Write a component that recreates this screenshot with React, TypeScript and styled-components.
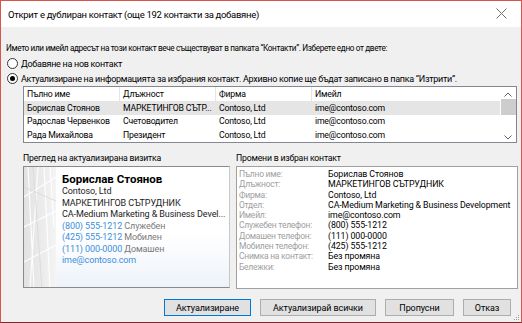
import React from 'react';
import styled, { createGlobalStyle } from 'styled-components';

const GlobalStyle = createGlobalStyle`
    html, body {
        margin: 0;
        padding: 0;
        background: #ffffff;
    }
    * {
        box-sizing: border-box;
    }
`

type Row = { name: string; title: string; company: string; email: string };

const rows: Row[] = [
    { name: 'Борислав Стоянов', title: 'МАРКЕТИНГОВ СЪТР...', company: 'Contoso, Ltd', email: 'ime@contoso.com' },
    { name: 'Радослав Червенков', title: 'Счетоводител', company: 'Contoso, Ltd', email: 'ime@contoso.com' },
    { name: 'Рада Михайлова', title: 'Президент', company: 'Contoso, Ltd', email: 'ime@contoso.com' },
];

const changes: [string, string][] = [
    ['Пълно име:', 'Борислав Стоянов'],
    ['Длъжност:', 'МАРКЕТИНГОВ СЪТРУДНИК'],
    ['Фирма:', 'Contoso, Ltd'],
    ['Отдел:', 'CA-Medium Marketing & Business Development'],
    ['Имейл:', 'ime@contoso.com'],
    ['Служебен телефон:', '(800) 555-1212'],
    ['Домашен телефон:', '(111) 000-0000'],
    ['Мобилен телефон:', '(425) 555-1212'],
    ['Снимка на контакт:', 'Без промяна'],
    ['Бележки:', 'Без промяна'],
];

function App() {
    return (
        <>
            <GlobalStyle />
            <Window>
                <TitleBar>
                    <Title>Открит е дублиран контакт (още 192 контакти за добавяне)</Title>
                    <CloseIcon width="11" height="11" viewBox="0 0 11 11">
                        <path d="M0.5 0.5 L10.5 10.5 M10.5 0.5 L0.5 10.5" stroke="#707070" strokeWidth="1" fill="none" />
                    </CloseIcon>
                </TitleBar>
                <Body>
                    <Intro>Името или имейл адресът на този контакт вече съществуват в папката “Контакти”. Изберете едно от двете:</Intro>
                    <RadioRow>
                        <Radio />
                        Добавяне на нов контакт
                    </RadioRow>
                    <RadioRow>
                        <Radio checked />
                        Актуализиране на информацията за избрания контакт. Архивно копие ще бъдат записано в папка “Изтрити”.
                    </RadioRow>

                    <ListBox>
                        <ListGrid>
                            <HeaderRow>
                                <HeadCell>Пълно име</HeadCell>
                                <HeadCell>Длъжност</HeadCell>
                                <HeadCell>Фирма</HeadCell>
                                <HeadCell last>Имейл</HeadCell>
                            </HeaderRow>
                            {rows.map((r, i) => (
                                <DataRow key={i} selected={i === 0}>
                                    <Cell>{r.name}</Cell>
                                    <Cell>{r.title}</Cell>
                                    <Cell>{r.company}</Cell>
                                    <Cell>{r.email}</Cell>
                                </DataRow>
                            ))}
                        </ListGrid>
                        <ScrollBar>
                            <Arrow viewBox="0 0 8 5" width="8" height="5">
                                <path d="M0.5 4.5 L4 1 L7.5 4.5" stroke="#606060" fill="none" />
                            </Arrow>
                            <Thumb />
                            <Track />
                            <Arrow viewBox="0 0 8 5" width="8" height="5">
                                <path d="M0.5 0.5 L4 4 L7.5 0.5" stroke="#606060" fill="none" />
                            </Arrow>
                        </ScrollBar>
                    </ListBox>

                    <Panels>
                        <Panel>
                            <PanelLabel>Преглед на актуализирана визитка</PanelLabel>
                            <Card>
                                <CardStripe>
                                    <svg width="32" height="121" viewBox="0 0 32 121">
                                        <path d="M4 0 L10 121 M14 0 L6 121 M20 0 L26 121 M0 30 L32 10 M0 60 L32 44 M0 95 L32 78 M26 0 L30 60" stroke="#ffffff" strokeWidth="1.2" fill="none" opacity="0.9" />
                                        <path d="M9 0 L18 121 M0 20 L32 34" stroke="#d8d8d8" strokeWidth="0.8" fill="none" />
                                    </svg>
                                </CardStripe>
                                <CardBody>
                                    <CardName>Борислав Стоянов</CardName>
                                    <CardLine>Contoso, Ltd</CardLine>
                                    <CardLine>МАРКЕТИНГОВ СЪТРУДНИК</CardLine>
                                    <CardLine>CA-Medium Marketing &amp; Business Devel...</CardLine>
                                    <CardLine><Link>(800) 555-1212</Link> <Muted>Служебен</Muted></CardLine>
                                    <CardLine><Link>(425) 555-1212</Link> <Muted>Мобилен</Muted></CardLine>
                                    <CardLine><Link>(111) 000-0000</Link> <Muted>Домашен</Muted></CardLine>
                                    <CardLine><Link>ime@contoso.com</Link></CardLine>
                                </CardBody>
                            </Card>
                        </Panel>
                        <Panel>
                            <PanelLabel>Промени в избран контакт</PanelLabel>
                            <ChangesBox>
                                {changes.map(([k, v]) => (
                                    <ChangeRow key={k}>
                                        <ChangeKey>{k}</ChangeKey>
                                        <ChangeValue>{v}</ChangeValue>
                                    </ChangeRow>
                                ))}
                            </ChangesBox>
                        </Panel>
                    </Panels>

                    <ButtonRow>
                        <DialogButton focused width={87}>Актуализиране</DialogButton>
                        <DialogButton width={116}>Актуализирай всички</DialogButton>
                        <DialogButton width={69}>Пропусни</DialogButton>
                        <DialogButton width={48}>Отказ</DialogButton>
                    </ButtonRow>
                    <Grip viewBox="0 0 6 6" width="6" height="6">
                        <rect x="4" y="0" width="1" height="1" fill="#a0a0a0" />
                        <rect x="2" y="2" width="1" height="1" fill="#a0a0a0" />
                        <rect x="4" y="2" width="1" height="1" fill="#a0a0a0" />
                        <rect x="0" y="4" width="1" height="1" fill="#a0a0a0" />
                        <rect x="2" y="4" width="1" height="1" fill="#a0a0a0" />
                        <rect x="4" y="4" width="1" height="1" fill="#a0a0a0" />
                    </Grip>
                </Body>
            </Window>
        </>
    );
}

export default App;

const Window = styled.div`
    width: 522px;
    height: 323px;
    border: 1px solid #d9534f;
    border-bottom-color: #7a2a2a;
    display: flex;
    flex-direction: column;
    font-family: Roboto, "Noto Sans", sans-serif;
    color: #000;
    overflow: hidden;
`

const TitleBar = styled.div`
    height: 26px;
    background: #ffffff;
    display: flex;
    align-items: center;
    justify-content: space-between;
    padding: 0 14px 0 7px;
`

const Title = styled.div`
    font-size: 9.5px;
    letter-spacing: -0.3px;
    color: #000;
    margin-top: 1px;
    white-space: nowrap;
`

const CloseIcon = styled.svg`
    margin-top: -1px;
`

const Body = styled.div`
    flex: 1;
    background: #f0f0f0;
    padding: 15px 5px 0 5px;
    display: flex;
    flex-direction: column;
    position: relative;
    font-size: 8.7px;
    letter-spacing: -0.2px;
`

const Intro = styled.div`
    height: 13px;
    line-height: 13px;
    margin-bottom: 1px;
    white-space: nowrap;
    font-size: 8.2px;
    letter-spacing: -0.35px;
`

const RadioRow = styled.div`
    display: flex;
    align-items: center;
    gap: 3px;
    height: 15px;
    white-space: nowrap;
    font-size: 9px;
    letter-spacing: -0.28px;
`

const Radio = styled.span<{ checked?: boolean }>`
    width: 11px;
    height: 11px;
    border-radius: 50%;
    border: 1px solid #333;
    background: #fff;
    display: inline-flex;
    align-items: center;
    justify-content: center;
    flex-shrink: 0;
    margin-left: 1px;
    &::after {
        content: '';
        width: 5px;
        height: 5px;
        border-radius: 50%;
        background: ${p => (p.checked ? '#000' : 'transparent')};
    }
`

const ListBox = styled.div`
    margin: 0 0 0 17px;
    width: 494px;
    height: 57px;
    border: 1px solid #828790;
    background: #fff;
    display: flex;
`

const ListGrid = styled.div`
    flex: 1;
    display: flex;
    flex-direction: column;
`

const HeaderRow = styled.div`
    display: grid;
    grid-template-columns: 96px 96px 96px 1fr;
    height: 14px;
    align-items: center;
    color: #000;
`

const HeadCell = styled.div<{ last?: boolean }>`
    padding-left: 3px;
    height: 14px;
    line-height: 14px;
    border-right: ${p => (p.last ? 'none' : '1px solid #e5e5e5')};
`

const DataRow = styled.div<{ selected?: boolean }>`
    display: grid;
    grid-template-columns: 96px 96px 96px 1fr;
    height: 13.5px;
    align-items: center;
    background: ${p => (p.selected ? '#e5e5e5' : 'transparent')};
`

const Cell = styled.div`
    padding-left: 3px;
    white-space: nowrap;
    overflow: hidden;
`

const ScrollBar = styled.div`
    width: 16px;
    display: flex;
    flex-direction: column;
    align-items: center;
    background: #fff;
`

const Arrow = styled.svg`
    margin: 5px 0 2px;
    flex-shrink: 0;
`

const Thumb = styled.div`
    width: 15px;
    height: 16px;
    background: #cdcdcd;
`

const Track = styled.div`
    flex: 1;
`

const Panels = styled.div`
    display: grid;
    grid-template-columns: 207px 282px;
    column-gap: 6px;
    margin: 8px 0 0 17px;
`

const Panel = styled.div`
    display: flex;
    flex-direction: column;
`

const PanelLabel = styled.div`
    height: 14px;
    line-height: 14px;
    margin-bottom: 1px;
    color: #000;
`

const Card = styled.div`
    height: 122px;
    border: 1px solid #8a8a8a;
    border-right-color: #c8c8c8;
    display: flex;
    background: #fff;
`

const CardStripe = styled.div`
    width: 32px;
    flex-shrink: 0;
    background: linear-gradient(to right, #e2e2e2, #ececec 60%, #f4f4f4);
    overflow: hidden;
`

const CardBody = styled.div`
    flex: 1;
    padding: 5px 0 0 6px;
    background: linear-gradient(to bottom, #ffffff 55%, #eef3f9);
    overflow: hidden;
    white-space: nowrap;
    font-size: 9px;
    letter-spacing: -0.1px;
`

const CardName = styled.div`
    font-size: 11.5px;
    font-weight: bold;
    letter-spacing: 0;
    height: 14px;
    line-height: 14px;
`

const CardLine = styled.div`
    height: 11.5px;
    line-height: 11.5px;
    color: #222;
`

const Link = styled.span`
    color: #3c8fdd;
`

const Muted = styled.span`
    color: #7a7a7a;
`

const ChangesBox = styled.div`
    height: 123px;
    border: 1px solid #a0a0a0;
    background: #fff;
    padding: 2px 0 0 2px;
    overflow: hidden;
`

const ChangeRow = styled.div`
    display: grid;
    grid-template-columns: 89px 1fr;
    height: 10.3px;
    line-height: 10.3px;
    white-space: nowrap;
    font-size: 8.8px;
    letter-spacing: -0.1px;
`

const ChangeKey = styled.div`
    color: #a0a0a0;
    font-size: 8.5px;
    letter-spacing: -0.25px;
    overflow: hidden;
`

const ChangeValue = styled.div`
    color: #000;
    overflow: hidden;
`

const ButtonRow = styled.div`
    display: flex;
    justify-content: flex-end;
    gap: 9px;
    margin: 10px 5px 0 0;
`

const DialogButton = styled.button<{ focused?: boolean; width: number }>`
    width: ${p => p.width}px;
    height: 17px;
    padding: 0;
    font-family: inherit;
    font-size: 9px;
    letter-spacing: -0.1px;
    color: #000;
    background: #e1e1e1;
    border: 1px solid ${p => (p.focused ? '#0078d7' : '#adadad')};
    border-radius: 0;
`

const Grip = styled.svg`
    position: absolute;
    right: 1px;
    bottom: 1px;
`
